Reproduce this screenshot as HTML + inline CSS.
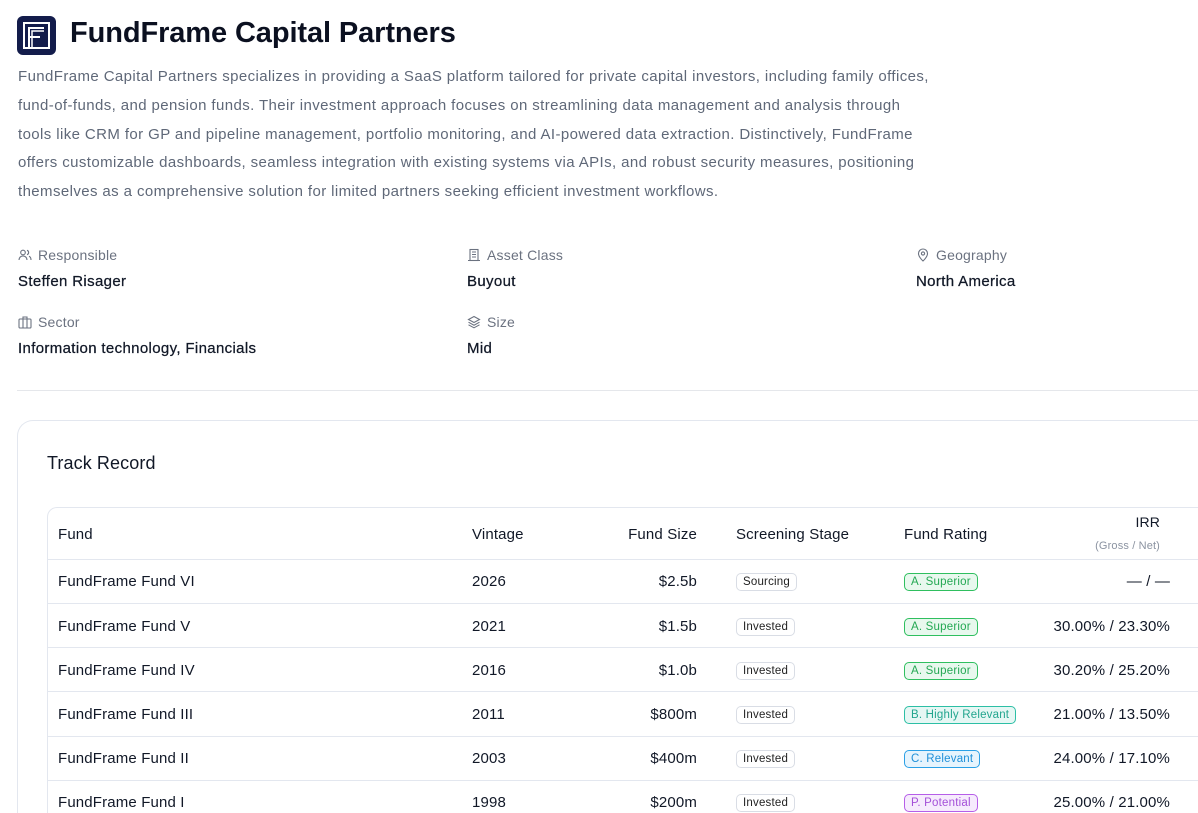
<!DOCTYPE html>
<html style="width:1198px;height:813px;overflow:hidden"><head><meta charset="utf-8"><style>
*{margin:0;padding:0;box-sizing:border-box}
body{width:1198px;height:813px;overflow:hidden;background:#fff;font-family:"Liberation Sans",sans-serif;color:#111827;position:relative}
.logo{position:absolute;left:17px;top:16px;width:39px;height:39px;background:#131c4b;border-radius:6px}
h1{position:absolute;left:70px;top:17px;font-size:29px;font-weight:bold;letter-spacing:-0.1px;color:#0b1020}
.desc{position:absolute;left:18px;top:63px;font-size:15px;line-height:28.8px;color:#5f6878;letter-spacing:0.4px;white-space:nowrap}
.meta{position:absolute;font-size:14px;color:#6b7280;letter-spacing:0.2px}
.meta svg{vertical-align:-2px;margin-right:6px}
.val{position:absolute;font-size:15px;color:#111827;letter-spacing:0.35px;-webkit-text-stroke:0.25px #111827}
.hr{position:absolute;left:17px;right:0;top:390px;border-top:1px solid #e5e7eb}
.card{position:absolute;left:17px;top:420px;width:1250px;height:393px;border:1px solid #e3e7ef;border-bottom:none;border-radius:16px 16px 0 0}
.tr-title{position:absolute;left:47px;top:453px;font-size:18px;letter-spacing:0.1px}
.tbl{position:absolute;left:47px;top:507px;width:1200px;height:306px;border:1px solid #e3e7ef;border-bottom:none;border-radius:10px 10px 0 0}
.row{position:absolute;left:47px;width:1160px;border-top:1px solid #e3e7ef}
.c{position:absolute;font-size:15px;color:#111827;white-space:nowrap;letter-spacing:0.15px;margin-top:1px}
.r{text-align:right}
.pill{position:absolute;font-size:11.5px;border:1px solid;border-radius:5px;padding:1px 6px;line-height:14px;white-space:nowrap;letter-spacing:0.2px}
.st{border-color:#d9dde5;color:#222;background:#fff}
.g{border-color:#2fbf5f;color:#24a853;background:#e8f8ee}
.t{border-color:#2cbfa5;color:#22a58e;background:#e6f7f4}
.b{border-color:#2ba0e6;color:#2090d8;background:#e6f4fd}
.p{border-color:#b65ee8;color:#a44fd8;background:#f6ebfd}
</style></head><body>
<div class="logo"><svg width="39" height="39" viewBox="0 0 39 39"><rect x="7" y="7" width="25" height="25" fill="none" stroke="#fff" stroke-width="2"/><path d="M12 32V12h15M12 21h11" fill="none" stroke="#fff" stroke-width="2"/><path d="M15 32V15h12" fill="none" stroke="#fff" stroke-width="1.5"/></svg></div>
<h1>FundFrame Capital Partners</h1>
<div class="desc">FundFrame Capital Partners specializes in providing a SaaS platform tailored for private capital investors, including family offices,<br>fund-of-funds, and pension funds. Their investment approach focuses on streamlining data management and analysis through<br>tools like CRM for GP and pipeline management, portfolio monitoring, and AI-powered data extraction. Distinctively, FundFrame<br>offers customizable dashboards, seamless integration with existing systems via APIs, and robust security measures, positioning<br>themselves as a comprehensive solution for limited partners seeking efficient investment workflows.</div>

<div class="meta" style="left:18px;top:247px"><svg width="14" height="14" viewBox="0 0 14 14" fill="none" stroke="#6b7280" stroke-width="1.1"><circle cx="5" cy="4.5" r="2.3"/><path d="M1 12c0-2.5 1.8-4 4-4s4 1.5 4 4M9 2.3a2.3 2.3 0 010 4.4M11 8.3c1.2.5 2 1.8 2 3.7"/></svg>Responsible</div>
<div class="val" style="left:18px;top:273px">Steffen Risager</div>
<div class="meta" style="left:467px;top:247px"><svg width="14" height="14" viewBox="0 0 14 14" fill="none" stroke="#6b7280" stroke-width="1.1"><rect x="3" y="1.5" width="8" height="11"/><path d="M1 12.5h12M5 4h4M5 6.5h4M5 9h4"/></svg>Asset Class</div>
<div class="val" style="left:467px;top:273px">Buyout</div>
<div class="meta" style="left:916px;top:247px"><svg width="14" height="14" viewBox="0 0 14 14" fill="none" stroke="#6b7280" stroke-width="1.1"><path d="M7 13s4.5-4 4.5-7.5a4.5 4.5 0 00-9 0C2.5 9 7 13 7 13z"/><circle cx="7" cy="5.5" r="1.6"/></svg>Geography</div>
<div class="val" style="left:916px;top:273px">North America</div>
<div class="meta" style="left:18px;top:314px"><svg width="14" height="14" viewBox="0 0 14 14" fill="none" stroke="#6b7280" stroke-width="1.1"><rect x="1" y="4" width="12" height="9" rx="1"/><path d="M5 4V2h4v2M5 4v9M9 4v9"/></svg>Sector</div>
<div class="val" style="left:18px;top:340px">Information technology, Financials</div>
<div class="meta" style="left:467px;top:314px"><svg width="14" height="14" viewBox="0 0 14 14" fill="none" stroke="#6b7280" stroke-width="1.1"><path d="M7 1.5l5.5 3L7 7.5 1.5 4.5z"/><path d="M1.5 7.2L7 10.2l5.5-3M1.5 9.8L7 12.8l5.5-3"/></svg>Size</div>
<div class="val" style="left:467px;top:340px">Mid</div>
<div class="hr"></div>

<div class="card"></div>
<div class="tr-title">Track Record</div>
<div class="tbl"></div>
<div class="c" style="left:58px;top:525px">Fund</div>
<div class="c" style="left:472px;top:525px">Vintage</div>
<div class="c r" style="left:597px;width:100px;top:525px">Fund Size</div>
<div class="c" style="left:736px;top:525px">Screening Stage</div>
<div class="c" style="left:904px;top:525px">Fund Rating</div>
<div class="c r" style="left:1060px;width:100px;top:513px;font-size:14px">IRR</div>
<div class="c r" style="left:1060px;width:100px;top:539px;font-size:11px;color:#8b93a1">(Gross / Net)</div>

<div class="row" style="top:559px"></div>
<div class="row" style="top:603px"></div>
<div class="row" style="top:647px"></div>
<div class="row" style="top:691px"></div>
<div class="row" style="top:736px"></div>
<div class="row" style="top:780px"></div>

<div class="c" style="left:58px;top:572px">FundFrame Fund VI</div><div class="c" style="left:472px;top:572px">2026</div><div class="c r" style="left:597px;width:100px;top:572px">$2.5b</div><div class="pill st" style="left:736px;top:573px">Sourcing</div><div class="pill g" style="left:904px;top:573px">A. Superior</div><div class="c r" style="left:1020px;width:150px;top:572px">— / —</div>
<div class="c" style="left:58px;top:617px">FundFrame Fund V</div><div class="c" style="left:472px;top:617px">2021</div><div class="c r" style="left:597px;width:100px;top:617px">$1.5b</div><div class="pill st" style="left:736px;top:618px">Invested</div><div class="pill g" style="left:904px;top:618px">A. Superior</div><div class="c r" style="left:1000px;width:170px;top:617px">30.00% / 23.30%</div>
<div class="c" style="left:58px;top:661px">FundFrame Fund IV</div><div class="c" style="left:472px;top:661px">2016</div><div class="c r" style="left:597px;width:100px;top:661px">$1.0b</div><div class="pill st" style="left:736px;top:662px">Invested</div><div class="pill g" style="left:904px;top:662px">A. Superior</div><div class="c r" style="left:1000px;width:170px;top:661px">30.20% / 25.20%</div>
<div class="c" style="left:58px;top:705px">FundFrame Fund III</div><div class="c" style="left:472px;top:705px">2011</div><div class="c r" style="left:597px;width:100px;top:705px">$800m</div><div class="pill st" style="left:736px;top:706px">Invested</div><div class="pill t" style="left:904px;top:706px">B. Highly Relevant</div><div class="c r" style="left:1000px;width:170px;top:705px">21.00% / 13.50%</div>
<div class="c" style="left:58px;top:749px">FundFrame Fund II</div><div class="c" style="left:472px;top:749px">2003</div><div class="c r" style="left:597px;width:100px;top:749px">$400m</div><div class="pill st" style="left:736px;top:750px">Invested</div><div class="pill b" style="left:904px;top:750px">C. Relevant</div><div class="c r" style="left:1000px;width:170px;top:749px">24.00% / 17.10%</div>
<div class="c" style="left:58px;top:793px">FundFrame Fund I</div><div class="c" style="left:472px;top:793px">1998</div><div class="c r" style="left:597px;width:100px;top:793px">$200m</div><div class="pill st" style="left:736px;top:794px">Invested</div><div class="pill p" style="left:904px;top:794px">P. Potential</div><div class="c r" style="left:1000px;width:170px;top:793px">25.00% / 21.00%</div>
</body></html>
